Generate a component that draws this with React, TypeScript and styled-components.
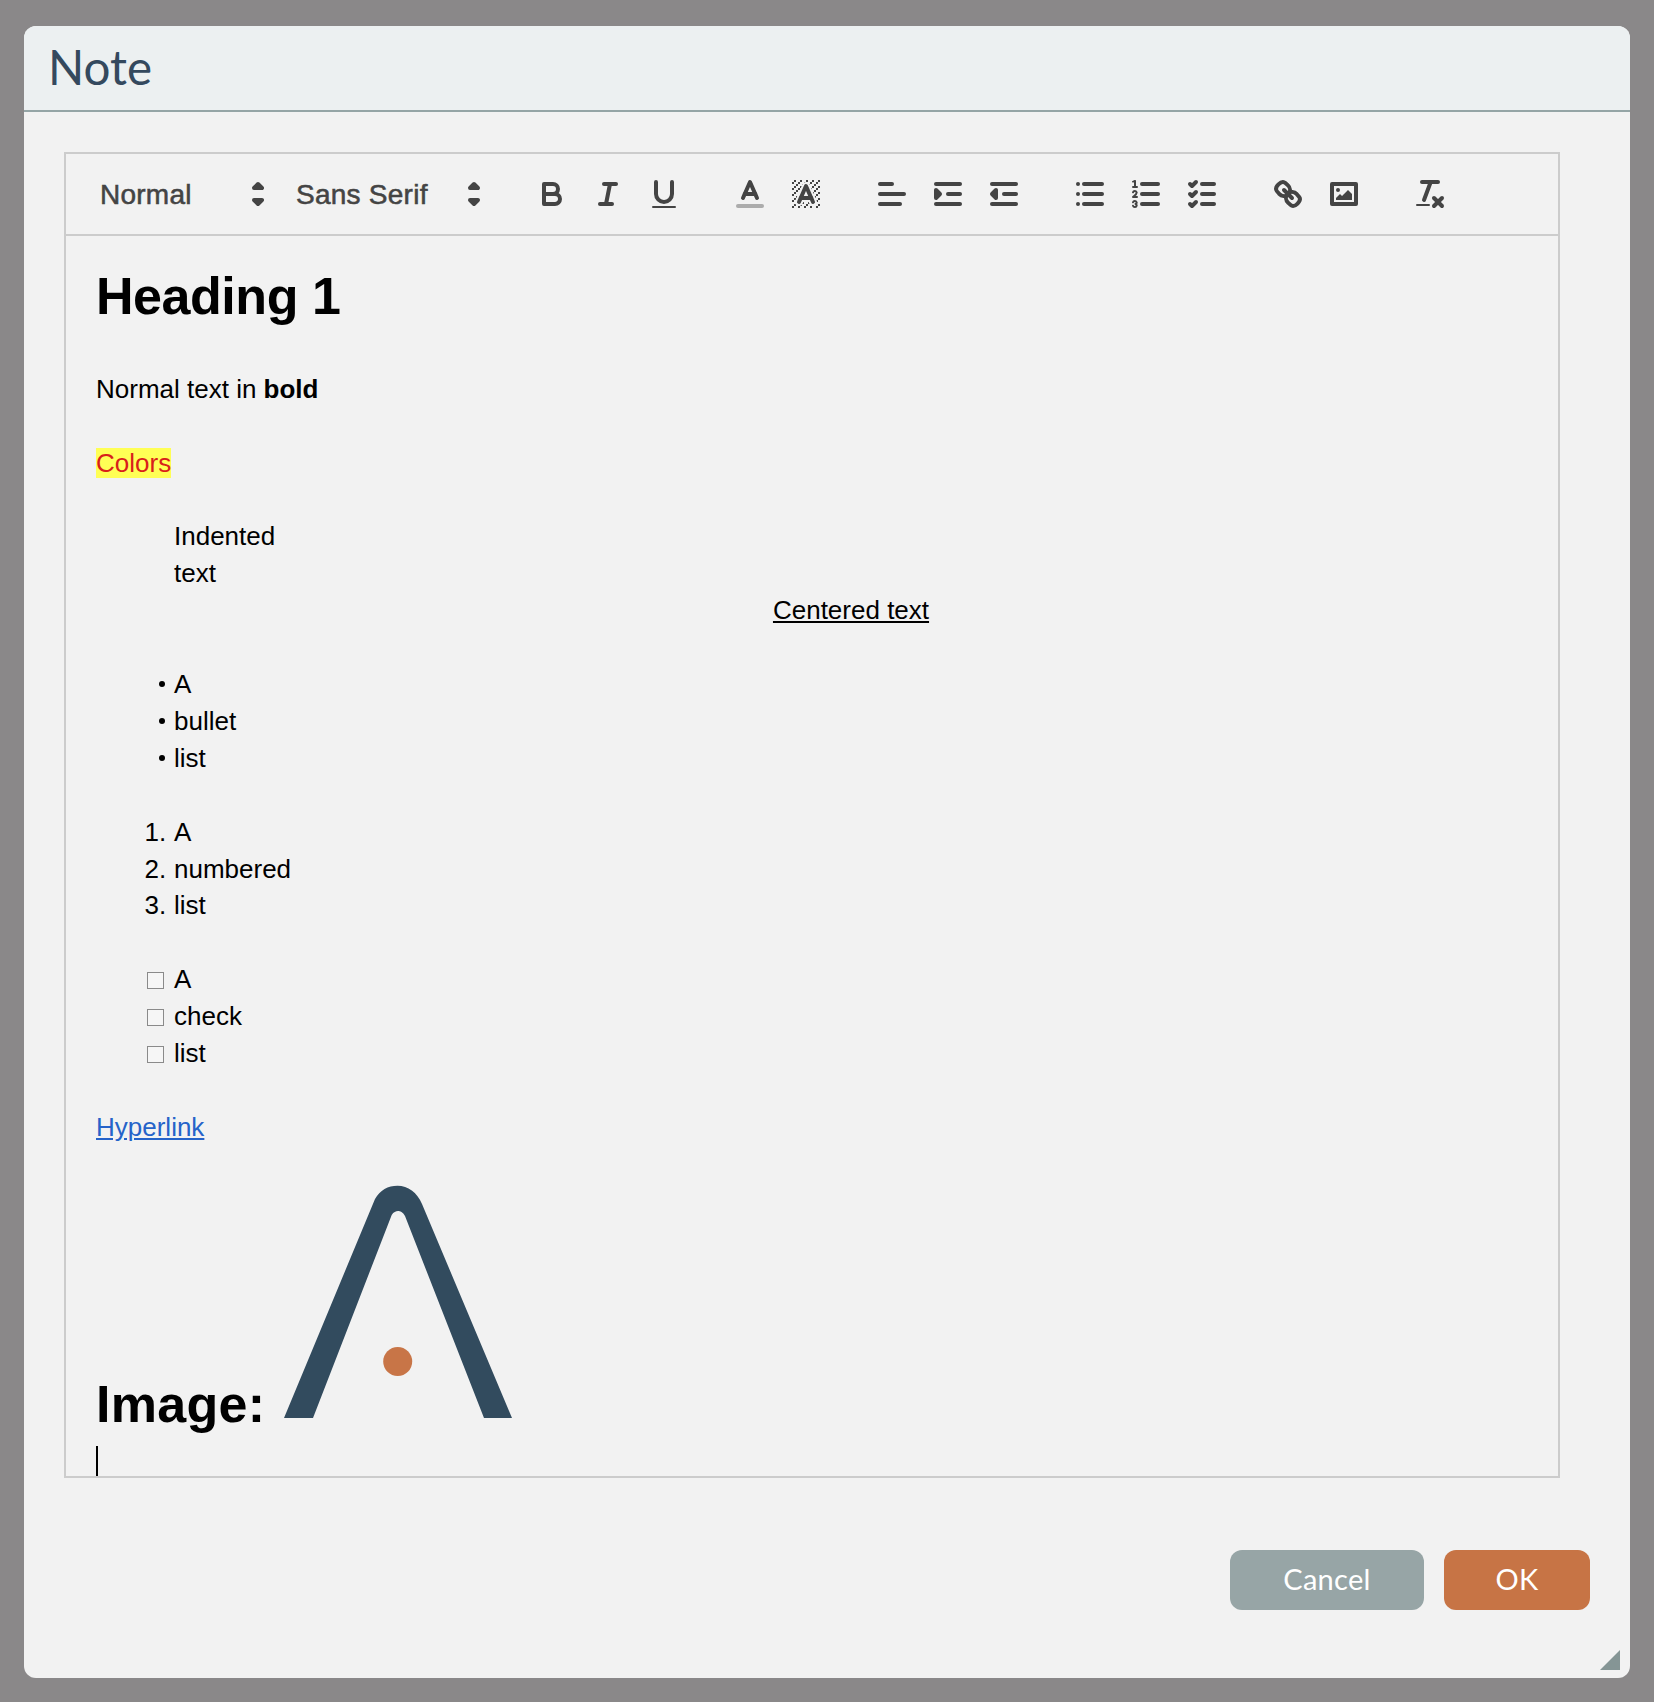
import React from 'react'
import styled, { createGlobalStyle } from 'styled-components'

const GlobalStyle = createGlobalStyle`
  html, body {
    margin: 0;
    padding: 0;
    background: #8a8889;
  }
  * {
    box-sizing: border-box;
  }
`

const Backdrop = styled.div`
  width: 1654px;
  height: 1702px;
  padding: 26px 24px 24px;
  background: #8a8889;
`

const Modal = styled.div`
  position: relative;
  height: 100%;
  display: flex;
  flex-direction: column;
  background: #f2f2f2;
  border-radius: 12px;
  overflow: hidden;
`

const Header = styled.header`
  height: 86px;
  flex: none;
  display: flex;
  align-items: center;
  padding: 0 0 4px 24px;
  background: #ecf0f1;
  border-bottom: 2px solid #95a5a6;
`

const Title = styled.h2`
  margin: 0;
  font-family: Lato, sans-serif;
  font-size: 47.5px;
  font-weight: 400;
  color: #34495e;
`

const Body = styled.div`
  flex: none;
  padding: 40px 70px 0 40px;
`

const EditorBox = styled.div`
  height: 1326px;
  display: flex;
  flex-direction: column;
  border: 2px solid #ccc;
  overflow: hidden;
`

const Toolbar = styled.div`
  flex: none;
  display: flex;
  padding: 16px;
  border-bottom: 2px solid #ccc;
`

const Group = styled.div`
  display: flex;
  margin-right: 30px;
`

const Picker = styled.div<{ $width: number }>`
  position: relative;
  width: ${p => p.$width}px;
  height: 48px;
  display: flex;
  align-items: center;
  padding: 2px 0 0 18px;
  font-family: 'Liberation Sans', Arial, sans-serif;
  font-size: 28px;
  color: #444;
  -webkit-text-stroke: 0.55px #444;
  letter-spacing: 0.25px;

  svg {
    position: absolute;
    right: 2px;
    top: 8px;
  }
`

const ToolButton = styled.button`
  width: 56px;
  height: 48px;
  padding: 6px 10px;
  border: none;
  background: none;

  svg {
    display: block;
  }
`

const Icon = styled.svg`
  width: 36px;
  height: 36px;
  fill: none;
  stroke: #444;
  stroke-width: 2;
  stroke-linecap: round;
  stroke-linejoin: round;

  .fill {
    fill: #444;
    stroke: none;
  }
  .thin {
    stroke-width: 1;
  }
  .label {
    stroke-opacity: 0.4;
  }
  .solid {
    fill: #444;
  }
`

const Editor = styled.div`
  flex: 1;
  padding: 24px 30px 0;
  font-family: 'Liberation Sans', Arial, sans-serif;
  font-size: 26px;
  line-height: 1.42;
  color: #000;
`

const Heading = styled.h1<{ $tracking: number }>`
  margin: 0;
  font-size: 52px;
  font-weight: 700;
  letter-spacing: ${p => p.$tracking}px;
`

const Line = styled.p<{ $indent?: boolean; $center?: boolean }>`
  margin: 0;
  min-height: 36.92px;
  padding-left: ${p => (p.$indent ? '78px' : '0')};
  text-align: ${p => (p.$center ? 'center' : 'left')};
`

const Highlight = styled.span`
  color: #d8201a;
  background: #ffff55;
`

const Underlined = styled.u`
  text-decoration: underline;
`

const Link = styled.a`
  color: #2563c9;
  text-decoration: underline;
`

const List = styled.ul`
  margin: 0;
  padding: 0 0 0 39px;
  list-style: none;
`

const Item = styled.li<{ $marker: string }>`
  padding-left: 39px;

  &::before {
    content: '${p => p.$marker}';
    display: inline-block;
    width: 31.2px;
    margin-left: -39px;
    margin-right: 7.8px;
    text-align: right;
    white-space: nowrap;
  }
`

const BulletItem = styled.li`
  position: relative;
  padding-left: 39px;

  &::before {
    content: '';
    position: absolute;
    left: 24px;
    top: 15px;
    width: 6px;
    height: 6px;
    border-radius: 50%;
    background: #000;
  }
`

const CheckItem = styled.li`
  position: relative;
  padding-left: 39px;

  &::before {
    content: '';
    position: absolute;
    left: 12px;
    top: 11px;
    width: 15px;
    height: 15px;
    border: 1.5px solid #8a8a8a;
    background: #f6f6f6;
  }
`

const Logo = styled.svg`
  width: 240px;
  height: 239px;
  margin-left: -2px;
`

const Caret = styled.div`
  width: 2px;
  height: 30px;
  margin-top: 4px;
  background: #000;
`

const Footer = styled.footer`
  display: flex;
  justify-content: flex-end;
  gap: 20px;
  padding: 72px 40px 0 0;
`

const DialogButton = styled.button<{ $primary?: boolean }>`
  height: 60px;
  width: ${p => (p.$primary ? '146px' : '194px')};
  padding: 0 0 3px;
  border: none;
  border-radius: 12px;
  background: ${p => (p.$primary ? '#c77445' : '#97a5a6')};
  color: #fff;
  font-family: Lato, sans-serif;
  font-size: 29px;
  letter-spacing: 0.3px;
`

const ResizeHandle = styled.div`
  position: absolute;
  right: 10px;
  bottom: 8px;
  width: 20px;
  height: 20px;
  background: #859595;
  clip-path: polygon(100% 0, 100% 100%, 0 100%);
`

const Arrows = () => (
  <Icon viewBox="0 0 18 18">
    <polygon className="solid" points="7 11 9 13 11 11 7 11" />
    <polygon className="solid" points="7 5 9 3 11 5 7 5" />
  </Icon>
)

// checker cells of the background colour icon
const bgCells = [
  [4, 4], [2, 6], [3, 5], [4, 7], [2, 12], [2, 9], [2, 15], [3, 8], [12, 2], [11, 3], [2, 3],
  [6, 2], [3, 2], [5, 3], [9, 2], [15, 14], [13, 7], [15, 5], [14, 6], [15, 8], [14, 9], [14, 3],
  [15, 2], [12, 5], [13, 4], [9, 14], [8, 15], [5, 15], [11, 15], [14, 15], [15, 11],
]

const bgPieces = [
  'M6 6.868V6H5v1h.942z',
  'M6.817 5H6v1h.38z',
  'M4 11.439V11H3v1h.755z',
  'M4.63 10H4v1h.192z',
  'M10.832 4.2L11 4.582V4h-.292a1.948 1.948 0 0 1 .124.2z',
  'M7 4.582l.168-.382A1.929 1.929 0 0 1 7.292 4H7z',
  'M8 13h-.317l-.351.8a1.933 1.933 0 0 1-.124.2H8z',
  'M9 3H8v.282A1.985 1.985 0 0 1 9 3z',
  'M13.447 10.174l.361.826H14v-1h-.63z',
  'M3.775 14H3v1h1v-.686a1.97 1.97 0 0 1-.225-.314z',
  'M12 6.868V6h-.38z',
  'M12.933 9H13V8h-.505z',
  'M6 14.926V15h1v-.684a1.993 1.993 0 0 1-1 .61z',
  'M10.668 13.8L10.317 13H10v1h.792a1.947 1.947 0 0 1-.124-.2z',
  'M14.332 12.2a1.99 1.99 0 0 1 .166.8H15v-1h-.755z',
]

export default function App() {
  return (
    <>
      <GlobalStyle />
      <Backdrop>
        <Modal>
          <Header>
            <Title>Note</Title>
          </Header>
          <Body>
            <EditorBox>
              <Toolbar>
                <Group>
                  <Picker $width={196}>Normal<Arrows /></Picker>
                  <Picker $width={216}>Sans Serif<Arrows /></Picker>
                </Group>
                <Group>
                  <ToolButton>
                    <Icon viewBox="0 0 18 18">
                      <path d="M5,4H9.5A2.5,2.5,0,0,1,12,6.5v0A2.5,2.5,0,0,1,9.5,9H5V4Z" />
                      <path d="M5,9h5.5A2.5,2.5,0,0,1,13,11.5v0A2.5,2.5,0,0,1,10.5,14H5V9Z" />
                    </Icon>
                  </ToolButton>
                  <ToolButton>
                    <Icon viewBox="0 0 18 18">
                      <line x1="7" x2="13" y1="4" y2="4" />
                      <line x1="5" x2="11" y1="14" y2="14" />
                      <line x1="8" x2="10" y1="14" y2="4" />
                    </Icon>
                  </ToolButton>
                  <ToolButton>
                    <Icon viewBox="0 0 18 18">
                      <path d="M5,3V9a4.012,4.012,0,0,0,4,4H9a4.012,4.012,0,0,0,4-4V3" />
                      <rect className="fill" height="1" rx="0.5" ry="0.5" width="12" x="3" y="15" />
                    </Icon>
                  </ToolButton>
                </Group>
                <Group>
                  <ToolButton>
                    <Icon viewBox="0 0 18 18">
                      <line className="label" x1="3" x2="15" y1="15" y2="15" />
                      <polyline points="5.5 11 9 3 12.5 11" />
                      <line x1="11.63" x2="6.38" y1="9" y2="9" />
                    </Icon>
                  </ToolButton>
                  <ToolButton>
                    <Icon viewBox="0 0 18 18">
                      <g className="fill">
                        {bgCells.map(([x, y]) => (
                          <rect key={`${x}-${y}`} height="1" width="1" x={x} y={y} />
                        ))}
                        {bgPieces.map(d => (
                          <path key={d} d={d} />
                        ))}
                      </g>
                      <polyline points="5.5 13 9 5 12.5 13" />
                      <line x1="11.63" x2="6.38" y1="11" y2="11" />
                    </Icon>
                  </ToolButton>
                </Group>
                <Group>
                  <ToolButton>
                    <Icon viewBox="0 0 18 18">
                      <line x1="3" x2="15" y1="9" y2="9" />
                      <line x1="3" x2="13" y1="14" y2="14" />
                      <line x1="3" x2="9" y1="4" y2="4" />
                    </Icon>
                  </ToolButton>
                  <ToolButton>
                    <Icon viewBox="0 0 18 18">
                      <line x1="3" x2="15" y1="14" y2="14" />
                      <line x1="3" x2="15" y1="4" y2="4" />
                      <line x1="9" x2="15" y1="9" y2="9" />
                      <polyline className="solid" points="3 7 3 11 5 9 3 7" />
                    </Icon>
                  </ToolButton>
                  <ToolButton>
                    <Icon viewBox="0 0 18 18">
                      <line x1="3" x2="15" y1="14" y2="14" />
                      <line x1="3" x2="15" y1="4" y2="4" />
                      <line x1="9" x2="15" y1="9" y2="9" />
                      <polyline className="solid" points="5 7 5 11 3 9 5 7" />
                    </Icon>
                  </ToolButton>
                </Group>
                <Group>
                  <ToolButton>
                    <Icon viewBox="0 0 18 18">
                      <line x1="6" x2="15" y1="4" y2="4" />
                      <line x1="6" x2="15" y1="9" y2="9" />
                      <line x1="6" x2="15" y1="14" y2="14" />
                      <line x1="3" x2="3" y1="4" y2="4" />
                      <line x1="3" x2="3" y1="9" y2="9" />
                      <line x1="3" x2="3" y1="14" y2="14" />
                    </Icon>
                  </ToolButton>
                  <ToolButton>
                    <Icon viewBox="0 0 18 18">
                      <line x1="7" x2="15" y1="4" y2="4" />
                      <line x1="7" x2="15" y1="9" y2="9" />
                      <line x1="7" x2="15" y1="14" y2="14" />
                      <line className="thin" x1="2.5" x2="4.5" y1="5.5" y2="5.5" />
                      <path
                        className="fill"
                        d="M3.5,6A0.5,0.5,0,0,1,3,5.5V3.085l-0.276.138A0.5,0.5,0,0,1,2.053,3c-0.124-.247-0.023-0.324.224-0.447l1-.5A0.5,0.5,0,0,1,4,2.5v3A0.5,0.5,0,0,1,3.5,6Z"
                      />
                      <path className="thin" d="M4.5,10.5h-2c0-.234,1.85-1.076,1.85-2.234A0.959,0.959,0,0,0,2.5,8.156" />
                      <path
                        className="thin"
                        d="M2.5,14.846a0.959,0.959,0,0,0,1.85-.109A0.7,0.7,0,0,0,3.75,14a0.688,0.688,0,0,0,.6-0.736,0.959,0.959,0,0,0-1.85-.109"
                      />
                    </Icon>
                  </ToolButton>
                  <ToolButton>
                    <Icon viewBox="0 0 18 18">
                      <line x1="9" x2="15" y1="4" y2="4" />
                      <polyline points="3 4 4 5 6 3" />
                      <line x1="9" x2="15" y1="14" y2="14" />
                      <polyline points="3 14 4 15 6 13" />
                      <line x1="9" x2="15" y1="9" y2="9" />
                      <polyline points="3 9 4 10 6 8" />
                    </Icon>
                  </ToolButton>
                </Group>
                <Group>
                  <ToolButton>
                    <Icon viewBox="0 0 18 18">
                      <line x1="7" x2="11" y1="7" y2="11" />
                      <path d="M8.9,4.577a3.476,3.476,0,0,1,.36,4.679A3.476,3.476,0,0,1,4.577,8.9C3.185,7.5,2.035,6.4,4.217,4.217S7.5,3.185,8.9,4.577Z" />
                      <path d="M13.423,9.1a3.476,3.476,0,0,0-4.679-.36,3.476,3.476,0,0,0,.36,4.679c1.392,1.392,2.5,2.542,4.679.36S14.815,10.5,13.423,9.1Z" />
                    </Icon>
                  </ToolButton>
                  <ToolButton>
                    <Icon viewBox="0 0 18 18">
                      <rect height="10" width="12" x="3" y="4" />
                      <circle className="fill" cx="6" cy="7" r="1" />
                      <polyline className="fill" points="5 12 5 11 7 9 8 10 11 7 13 9 13 12 5 12" />
                    </Icon>
                  </ToolButton>
                </Group>
                <Group>
                  <ToolButton>
                    <Icon viewBox="0 0 18 18">
                      <line x1="5" x2="13" y1="3" y2="3" />
                      <line x1="6" x2="9.35" y1="12" y2="3" />
                      <line x1="11" x2="15" y1="11" y2="15" />
                      <line x1="15" x2="11" y1="11" y2="15" />
                      <rect className="fill" height="1" rx="0.5" ry="0.5" width="7" x="2" y="14" />
                    </Icon>
                  </ToolButton>
                </Group>
              </Toolbar>
              <Editor>
                <Heading $tracking={-0.45}>Heading 1</Heading>
                <Line />
                <Line>Normal text in <strong>bold</strong></Line>
                <Line />
                <Line><Highlight>Colors</Highlight></Line>
                <Line />
                <Line $indent>Indented</Line>
                <Line $indent>text</Line>
                <Line $indent $center><Underlined>Centered text</Underlined></Line>
                <Line />
                <List>
                  <BulletItem>A</BulletItem>
                  <BulletItem>bullet</BulletItem>
                  <BulletItem>list</BulletItem>
                </List>
                <Line />
                <List>
                  <Item $marker="1.">A</Item>
                  <Item $marker="2.">numbered</Item>
                  <Item $marker="3.">list</Item>
                </List>
                <Line />
                <List>
                  <CheckItem>A</CheckItem>
                  <CheckItem>check</CheckItem>
                  <CheckItem>list</CheckItem>
                </List>
                <Line />
                <Line><Link>Hyperlink</Link></Line>
                <Line />
                <Heading $tracking={0.3}>
                  Image:{' '}
                  <Logo viewBox="0 0 240 239">
                    <path
                      fill="#324b5e"
                      d="M6 235 L97 16 C102 7 110 2.7 119.5 2.7 C130 2.7 139 9 144 21 L234 235 L206 235 L127 33 C125 29 122 28 120 28 C118 28 115.5 29 113.7 32 L35 235 Z"
                    />
                    <circle cx="119.7" cy="178.5" r="14.5" fill="#c87547" />
                  </Logo>
                </Heading>
                <Caret />
              </Editor>
            </EditorBox>
          </Body>
          <Footer>
            <DialogButton>Cancel</DialogButton>
            <DialogButton $primary>OK</DialogButton>
          </Footer>
          <ResizeHandle />
        </Modal>
      </Backdrop>
    </>
  )
}
